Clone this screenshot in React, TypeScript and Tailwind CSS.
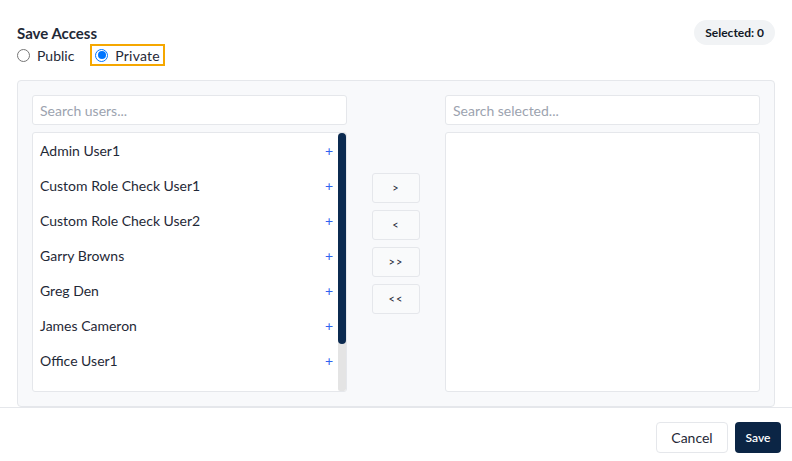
import React from "react";

const users = [
  "Admin User1",
  "Custom Role Check User1",
  "Custom Role Check User2",
  "Garry Browns",
  "Greg Den",
  "James Cameron",
  "Office User1",
];

function Radio({ checked }: { checked: boolean }) {
  return checked ? (
    <span className="w-[13px] h-[13px] rounded-full border border-[#0075ff] bg-white flex items-center justify-center shrink-0">
      <span className="w-[8px] h-[8px] rounded-full bg-[#0075ff]" />
    </span>
  ) : (
    <span className="w-[13px] h-[13px] rounded-full border border-[#767676] bg-white shrink-0" />
  );
}

export default function App() {
  return (
    <div className="w-[792px] h-[461px] bg-white font-['Lato',sans-serif] text-[#1f2937] flex flex-col overflow-hidden">
      <div className="px-[17px] pt-[20px]">
        <div className="flex justify-between items-start">
          <div className="pt-[4px]">
            <div className="text-[15px] leading-[18px] font-bold text-[#1f2937]">Save Access</div>
            <div className="flex items-center mt-[2px] h-[22px]">
              <label className="flex items-center gap-[7px] text-[14px]">
                <Radio checked={false} />
                <span>Public</span>
              </label>
              <label className="ml-[16px] flex items-center gap-[7px] text-[14px] border-2 border-[#f5a700] pl-[3px] pr-[3px] h-[22px]">
                <Radio checked={true} />
                <span className="tracking-[0.2px]">Private</span>
              </label>
            </div>
          </div>
          <div className="h-[25px] px-[11px] rounded-full bg-[#f1f3f5] flex items-center text-[12px] font-bold text-[#111827]">
            Selected: 0
          </div>
        </div>
        <div className="mt-[14px] h-[327px] border border-[#e5e7eb] rounded-[4px] bg-[#f8f9fb] p-[14px] flex">
          <div className="w-[315px] flex flex-col">
            <input
              placeholder="Search users..."
              className="h-[30px] w-full bg-white border border-[#e5e7eb] rounded-[3px] px-[7px] text-[14px] placeholder:text-[#9ca3af] outline-none"
            />
            <div className="mt-[7px] h-[260px] bg-white border border-[#e5e7eb] rounded-[3px] flex overflow-hidden">
              <div className="flex-1 flex flex-col">
                {users.map((u) => (
                  <div key={u} className="h-[35px] shrink-0 flex items-center justify-between pl-[7px] pr-[5px] text-[14px] text-[#1f2937]">
                    <span>{u}</span>
                    <span className="text-[#2f63f0] text-[14px]">+</span>
                  </div>
                ))}
              </div>
              <div className="w-[8px] bg-[#e4e4e4] rounded-[2px]">
                <div className="h-[211px] bg-[#0b2a50] rounded-full" />
              </div>
            </div>
          </div>
          <div className="w-[48px] mx-[25px] flex flex-col justify-center gap-[7px]">
            {[">", "<", ">>", "<<"].map((s) => (
              <button
                key={s}
                className="h-[30px] w-[48px] bg-[#f9fafb] border border-[#e5e7eb] rounded-[3px] text-[11px] text-[#1f2937] tracking-[1px]"
              >
                {s}
              </button>
            ))}
          </div>
          <div className="w-[315px] flex flex-col">
            <input
              placeholder="Search selected..."
              className="h-[30px] w-full bg-white border border-[#e5e7eb] rounded-[3px] px-[7px] text-[14px] placeholder:text-[#9ca3af] outline-none"
            />
            <div className="mt-[7px] h-[260px] bg-white border border-[#e5e7eb] rounded-[3px]" />
          </div>
        </div>
      </div>
      <div className="border-t border-[#e5e7eb] flex justify-end gap-[7px] pt-[14px] pr-[11px]">
        <button className="h-[31px] w-[72px] bg-white border border-[#e5e7eb] rounded-[4px] text-[14px] text-[#1f2937]">
          Cancel
        </button>
        <button className="h-[31px] w-[46px] bg-[#0b2545] rounded-[4px] text-[12px] font-semibold text-white">
          Save
        </button>
      </div>
    </div>
  );
}
